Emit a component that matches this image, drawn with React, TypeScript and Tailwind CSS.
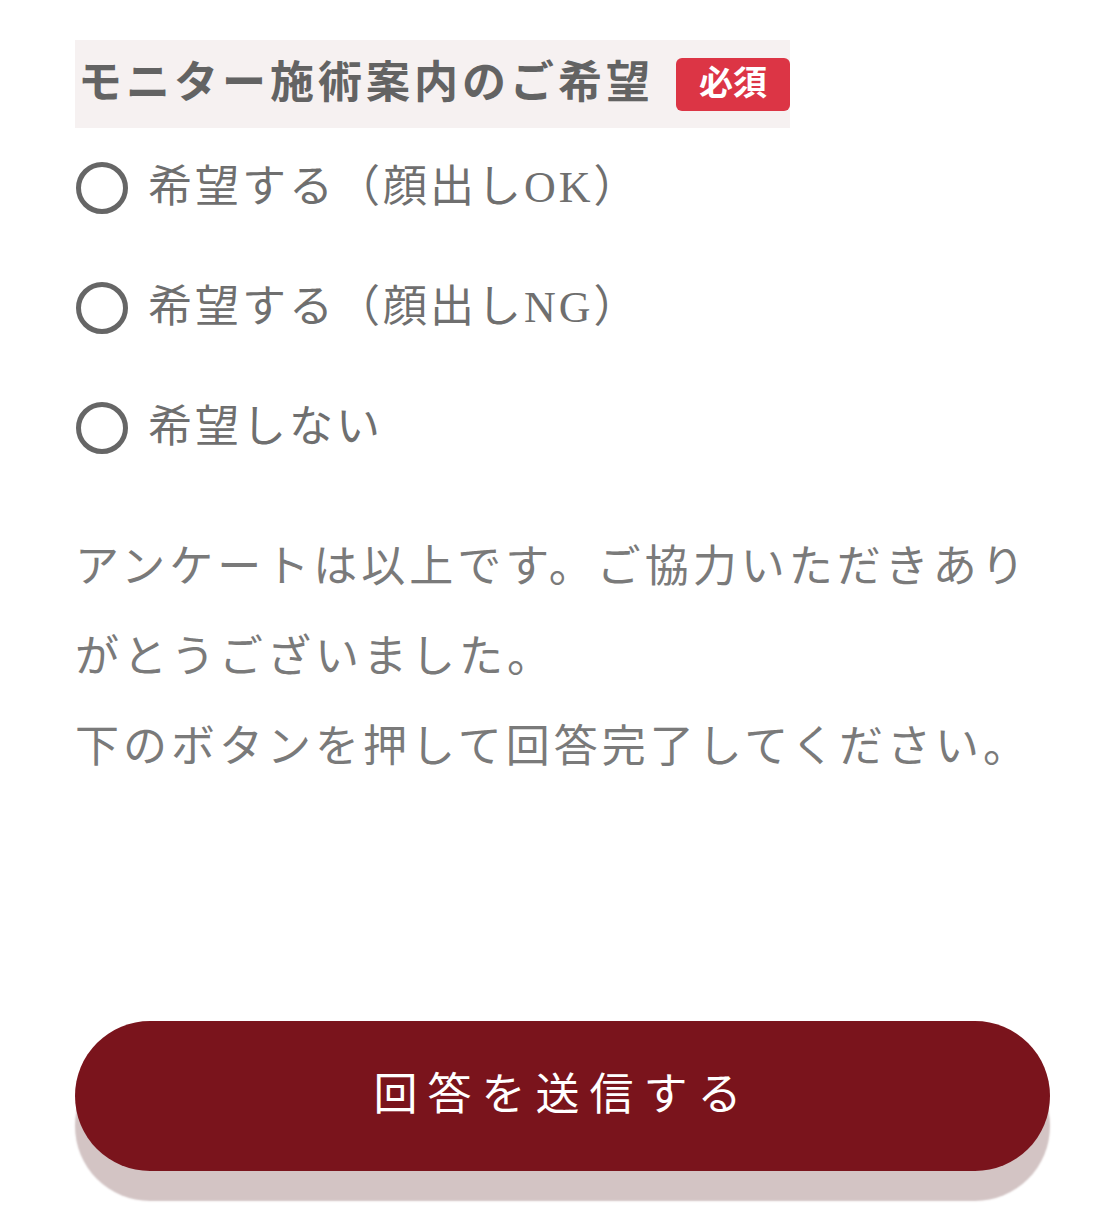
const font = "font-['Liberation_Serif','Noto_Sans_CJK_JP',serif]";

const options = ["希望する（顔出しOK）", "希望する（顔出しNG）", "希望しない"];

function RadioRow({ label }: { label: string }) {
  return (
    <label className="flex items-center h-[120px] cursor-pointer">
      <span className="w-[52px] h-[52px] rounded-full border-[5px] border-[#666] shrink-0 ml-px" />
      <span className="ml-[20px] text-[44px] leading-none tracking-[3px] text-[#6f6f6f]">
        {label}
      </span>
    </label>
  );
}

export default function App() {
  return (
    <main className={`min-h-screen bg-white pl-[75px] pr-[51px] pt-[40px] ${font}`}>
      <div className="inline-flex items-center h-[88px] bg-[#f6f1f1] pl-[3px]">
        <h2 className="text-[44px] leading-none font-bold tracking-[4px] text-[#636363]">
          モニター施術案内のご希望
        </h2>
        <span className="ml-[22px] flex items-center h-[53px] px-[23px] rounded-[6px] bg-[#dc3545] text-white text-[34px] font-bold leading-none">
          必須
        </span>
      </div>

      <div className="flex flex-col">
        {options.map((o) => (
          <RadioRow key={o} label={o} />
        ))}
      </div>

      <p className="mt-[35px] text-[44px] leading-[90px] tracking-[4px] text-[#7a7a7a]">
        アンケートは以上です。ご協力いただきありがとうございました。
        <br />
        下のボタンを押して回答完了してください。
      </p>

      <button className="mt-[228px] w-full h-[150px] rounded-full bg-[#7a141c] text-white text-[44px] tracking-[10px] shadow-[0_30px_2px_#d3c4c4]">
        回答を送信する
      </button>
    </main>
  );
}
